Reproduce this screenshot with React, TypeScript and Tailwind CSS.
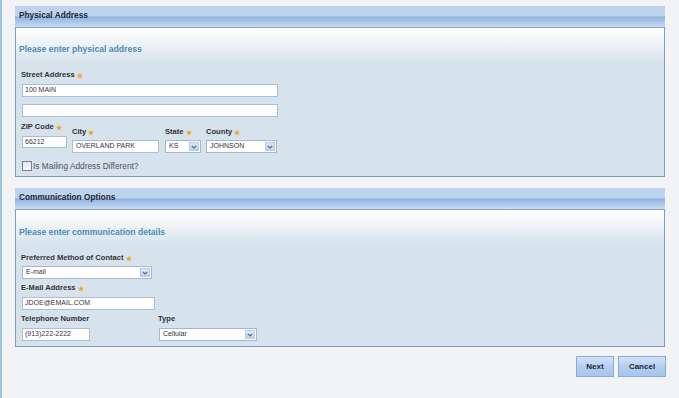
import type { ReactNode } from 'react';

const FONT = "font-['Liberation_Sans',Arial,sans-serif]";

function Star() {
  return <span className="ml-[2px] text-[7px] leading-none text-[#f4a51c]">★</span>;
}

function Label({ children, req }: { children: ReactNode; req?: boolean }) {
  return (
    <div className="flex h-[10px] items-center pl-[5px] text-[7.6px] leading-[10px] font-bold text-[#333]">
      {children}
      {req && <Star />}
    </div>
  );
}

function TextBox({ value, w, h = 13 }: { value: string; w: number; h?: number }) {
  return (
    <div
      className="ml-[6px] flex items-center border border-[#a8bfd8] bg-white pl-[2px] text-[7px] text-[#3a3344]"
      style={{ width: w, height: h }}
    >
      {value}
    </div>
  );
}

function Select({ value, w }: { value: string; w: number }) {
  return (
    <div
      className="flex h-[13px] items-stretch border border-[#a3b8d0] bg-white text-[7px] text-[#333]"
      style={{ width: w }}
    >
      <div className="flex flex-1 items-center pl-[3px]">{value}</div>
      <div className="m-px flex w-[10px] items-center justify-center border border-[#b6cbe6] bg-[linear-gradient(to_bottom,#dce8f8,#bcd2ef)]">
        <svg width="6" height="4" viewBox="0 0 6 4">
          <path d="M0.8 0.8 L3 3 L5.2 0.8" fill="none" stroke="#4b6b99" strokeWidth="1.2" />
        </svg>
      </div>
    </div>
  );
}

function Section({ title, children, pb }: { title: string; children: ReactNode; pb: number }) {
  return (
    <div className="w-[650px]">
      <div className="h-[22px] border-b border-[#86a5cf] bg-[linear-gradient(to_bottom,#bed4ee_0px,#bed4ee_10px,#8fb2e0_11px,#c9dbf1_21px)] pl-[4px] pt-[4px] text-[8.3px] leading-[10px] font-bold text-[#1e2633]">
        {title}
      </div>
      <div
        className="flow-root border-x border-b border-[#7d9bc6] bg-[linear-gradient(to_bottom,#ffffff_0px,#d6e2ec_36px)]"
        style={{ paddingBottom: pb }}
      >
        {children}
      </div>
    </div>
  );
}

function Subtitle({ children, mt }: { children: ReactNode; mt: number }) {
  return (
    <div className="h-[12px] pl-[3px] text-[8.6px] leading-[12px] font-bold text-[#4d8cb3]" style={{ marginTop: mt }}>
      {children}
    </div>
  );
}

export default function App() {
  return (
    <div className={`${FONT} h-[398px] w-[679px] border-l-2 border-[#9cc3e6] bg-[#f2f3f5] pl-[13px] pt-[6px]`}>
      <Section title="Physical Address" pb={5}>
        <Subtitle mt={15}>Please enter physical address</Subtitle>
        <div className="mt-[15px]">
          <Label req>Street Address</Label>
        </div>
        <div className="mt-[4px]">
          <TextBox value="100 MAIN" w={256} />
        </div>
        <div className="mt-[7px]">
          <TextBox value="" w={256} />
        </div>
        <div className="mt-[5px] flex">
          <div>
            <Label req>ZIP Code</Label>
            <div className="mt-[4px]">
              <TextBox value="66212" w={45} h={12} />
            </div>
          </div>
          <div className="ml-[5px] pt-[5px]">
            <div className="-ml-[5px]">
              <Label req>City</Label>
            </div>
            <div className="mt-[3px]">
              <div className="flex h-[13px] w-[87px] items-center border border-[#a8bfd8] bg-white pl-[3px] text-[7px] text-[#3a3344]">
                OVERLAND PARK
              </div>
            </div>
          </div>
          <div className="ml-[6px] pt-[5px]">
            <div className="-ml-[5px]">
              <Label req>State</Label>
            </div>
            <div className="mt-[3px]">
              <Select value="KS" w={36} />
            </div>
          </div>
          <div className="ml-[5px] pt-[5px]">
            <div className="-ml-[5px]">
              <Label req>County</Label>
            </div>
            <div className="mt-[3px]">
              <Select value="JOHNSON" w={71} />
            </div>
          </div>
        </div>
        <div className="mt-[8px] flex h-[10px] items-center pl-[6px]">
          <div className="h-[10px] w-[10px] border border-[#737f93] bg-[linear-gradient(to_bottom,#e3e6ea,#fbfbfc)]" />
          <span className="ml-[1px] text-[8.3px] leading-[10px] text-[#55506a]">Is Mailing Address Different?</span>
        </div>
      </Section>

      <div className="mt-[11px]">
        <Section title="Communication Options" pb={5}>
          <Subtitle mt={16}>Please enter communication details</Subtitle>
          <div className="mt-[15px]">
            <Label req>Preferred Method of Contact</Label>
          </div>
          <div className="mt-[3px] pl-[6px]">
            <Select value="E-mail" w={130} />
          </div>
          <div className="mt-[4px]">
            <Label req>E-Mail Address</Label>
          </div>
          <div className="mt-[4px]">
            <TextBox value="JDOE@EMAIL.COM" w={133} />
          </div>
          <div className="mt-[4px] flex">
            <div>
              <Label>Telephone Number</Label>
              <div className="mt-[4px]">
                <TextBox value="(913)222-2222" w={68} />
              </div>
            </div>
            <div className="ml-[63px]">
              <Label>Type</Label>
              <div className="mt-[4px] pl-[6px]">
                <Select value="Cellular" w={98} />
              </div>
            </div>
          </div>
        </Section>
      </div>

      <div className="-mr-px mt-[9px] flex w-[651px] justify-end gap-[4px]">
        <button className="h-[21px] w-[38px] border border-[#86acd9] bg-[linear-gradient(to_bottom,#d3e3f7,#b2cdee_55%,#a6c6ee)] text-[8px] font-bold text-[#1e2633]">
          Next
        </button>
        <button className="h-[21px] w-[48px] border border-[#86acd9] bg-[linear-gradient(to_bottom,#d3e3f7,#b2cdee_55%,#a6c6ee)] text-[8px] font-bold text-[#1e2633]">
          Cancel
        </button>
      </div>
    </div>
  );
}
